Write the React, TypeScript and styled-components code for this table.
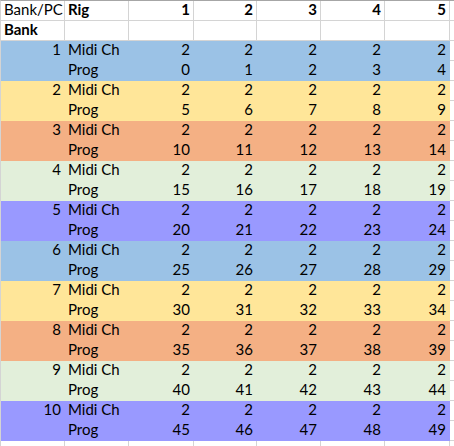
import styled, { createGlobalStyle } from "styled-components";

const GlobalStyle = createGlobalStyle`
  html, body {
    margin: 0;
    padding: 0;
    background: #ffffff;
  }
  body {
    font-family: "Lato", "Liberation Sans", sans-serif;
    color: #000;
  }
`;

const bankColors = ["#9bc2e6", "#ffe699", "#f4b084", "#e2efda", "#9999ff"];

// bank, label, rigs 1-5, then the sliver of the next column
const COLS = "64px 64px 65px 63px 64px 64px 65px 1fr";

const Sheet = styled.div`
  box-sizing: border-box;
  display: grid;
  grid-template-columns: ${COLS};
  grid-auto-rows: 20px;
  border-top: 1px solid #a6a6a6;
  border-left: 1px solid #d4d4d4;
  width: 454px;
  height: 446px;
  overflow: hidden;
`;

const Cell = styled.div<{ $fill?: string; $align?: "left" | "right"; $bold?: boolean }>`
  box-sizing: border-box;
  display: flex;
  align-items: flex-end;
  justify-content: ${(p) => (p.$align === "right" ? "flex-end" : "flex-start")};
  padding: 0 3px 2px 3px;
  font-size: 15px;
  line-height: 17px;
  font-weight: ${(p) => (p.$bold ? 700 : 400)};
  background: ${(p) => p.$fill ?? "#ffffff"};
  border-right: 1px solid ${(p) => p.$fill ?? "#d4d4d4"};
  border-bottom: 1px solid ${(p) => p.$fill ?? "#d4d4d4"};
  white-space: nowrap;
`;

const Spacer = styled.div`
  box-sizing: border-box;
  border-bottom: 1px solid #d4d4d4;
`;

const rigs = [1, 2, 3, 4, 5];
const banks = Array.from({ length: 10 }, (_, i) => i + 1);

export default function App() {
  return (
    <>
      <GlobalStyle />
      <Sheet>
        <Cell>Bank/PC</Cell>
        <Cell $bold>Rig</Cell>
        {rigs.map((r) => (
          <Cell key={r} $align="right" $bold>
            {r}
          </Cell>
        ))}
        <Spacer />

        <Cell $bold>Bank</Cell>
        <Cell />
        {rigs.map((r) => (
          <Cell key={r} />
        ))}
        <Spacer />

        {banks.map((b) => {
          const fill = bankColors[(b - 1) % bankColors.length];
          return [
            <Cell key={`${b}-n`} $fill={fill} $align="right">
              {b}
            </Cell>,
            <Cell key={`${b}-m`} $fill={fill}>
              Midi Ch
            </Cell>,
            ...rigs.map((r) => (
              <Cell key={`${b}-m${r}`} $fill={fill} $align="right">
                2
              </Cell>
            )),
            <Spacer key={`${b}-ms`} />,
            <Cell key={`${b}-e`} $fill={fill} />,
            <Cell key={`${b}-p`} $fill={fill}>
              Prog
            </Cell>,
            ...rigs.map((r) => (
              <Cell key={`${b}-p${r}`} $fill={fill} $align="right">
                {(b - 1) * 5 + r - 1}
              </Cell>
            )),
            <Spacer key={`${b}-ps`} />,
          ];
        })}

        <Cell />
        <Cell />
        {rigs.map((r) => (
          <Cell key={`tail${r}`} />
        ))}
        <Spacer />
      </Sheet>
    </>
  );
}
